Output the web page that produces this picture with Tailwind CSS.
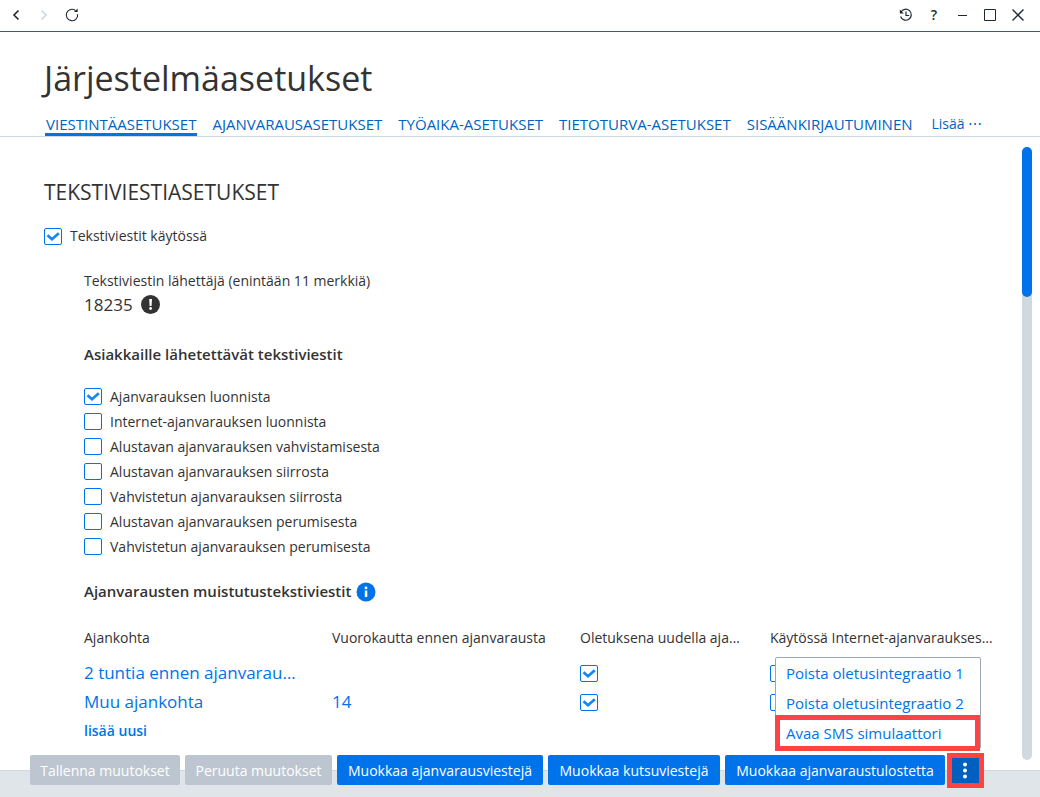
<!DOCTYPE html>
<html lang="fi">
<head>
    <meta charset="UTF-8">
    <meta name="viewport" content="width=device-width, initial-scale=1.0">
    <title>Järjestelmäasetukset</title>
    <script src="https://cdn.jsdelivr.net/npm/@tailwindcss/browser@4"></script>
</head>
<body class="flex h-screen flex-col overflow-hidden bg-white font-['Open_Sans','Noto_Sans',sans-serif] text-sm text-[#333333]">

    <!-- Window bar -->
    <div class="flex h-8 shrink-0 items-center justify-between border-b border-[#3b5998] px-2 pb-0.5 text-[#1f2933]">
        <div class="flex items-center gap-3">
            <button aria-label="Takaisin" class="size-4">
                <svg class="size-4" viewBox="0 0 16 16" fill="none" stroke="currentColor" stroke-width="1.6"><path d="M10.5 3.5 6 8l4.5 4.5"/></svg>
            </button>
            <button aria-label="Eteenpäin" class="size-4 text-[#ccd6e0]" disabled>
                <svg class="size-4" viewBox="0 0 16 16" fill="none" stroke="currentColor" stroke-width="1.6"><path d="M5.5 3.5 10 8l-4.5 4.5"/></svg>
            </button>
            <button aria-label="Päivitä" class="size-4">
                <svg class="size-4" viewBox="0 0 16 16" fill="none" stroke="currentColor" stroke-width="1.1"><path d="M13.6 7.2A5.700 5.700 0 1 1 11.600 3.600"/><path d="M10 5h3.600V1.500z" fill="currentColor" stroke="none"/></svg>
            </button>
        </div>
        <div class="flex items-center gap-3 pr-1.5">
            <button aria-label="Historia" class="size-4">
                <svg class="size-4" viewBox="0 0 16 16" fill="none" stroke="currentColor" stroke-width="1.2"><path d="M2.900 5.200A5.500 5.500 0 1 1 2.600 9.500"/><path d="M8 4.500V8.500h3.200"/><path d="M1.800 2.500v4h4z" fill="currentColor" stroke="none"/></svg>
            </button>
            <button aria-label="Ohje" class="size-4 text-sm leading-4 font-semibold">?</button>
            <button aria-label="Pienennä" class="size-4">
                <svg class="size-4" viewBox="0 0 16 16" stroke="currentColor"><path d="M4 8.500h9"/></svg>
            </button>
            <button aria-label="Suurenna" class="size-4">
                <svg class="size-4" viewBox="0 0 16 16" fill="none" stroke="currentColor"><path d="M2.500 2.500h11v11h-11z"/></svg>
            </button>
            <button aria-label="Sulje" class="size-4">
                <svg class="size-4" viewBox="0 0 16 16" stroke="currentColor" stroke-width="1.4"><path d="m2.500 2.500 11 11m0-11-11 11"/></svg>
            </button>
        </div>
    </div>

    <!-- Title and tabs -->
    <header class="shrink-0 border-b border-[#cfd8df] px-11 pt-[22px]">
        <h1 class="text-[34px] leading-[48px]">Järjestelmäasetukset</h1>
        <nav class="mt-[10px] flex gap-[14px] pl-px text-[15px] text-[#0063c2]">
            <a href="#" class="h-6 border-b-3 border-[#0073eb] px-px leading-6">VIESTINTÄASETUKSET</a>
            <a href="#" class="h-6 px-px leading-6">AJANVARAUSASETUKSET</a>
            <a href="#" class="h-6 px-px leading-6">TYÖAIKA-ASETUKSET</a>
            <a href="#" class="h-6 px-px leading-6">TIETOTURVA-ASETUKSET</a>
            <a href="#" class="h-6 px-px leading-6">SISÄÄNKIRJAUTUMINEN</a>
            <a href="#" class="h-6 px-1 text-sm leading-6">Lisää ⋯</a>
        </nav>
    </header>

    <div class="flex min-h-0 flex-1">
        <!-- Settings -->
        <main class="min-w-0 flex-1 overflow-hidden pt-[39px] pl-11">
            <h2 class="text-[21px] leading-8">TEKSTIVIESTIASETUKSET</h2>
            <label class="mt-4 flex h-6 items-center gap-2">
                <span class="relative flex">
                    <input type="checkbox" checked class="peer h-[17px] w-[18px] appearance-none rounded-xs border border-[#0073eb] bg-white">
                    <svg class="absolute inset-0 hidden h-[17px] w-[18px] peer-checked:block" viewBox="0 0 18 17" fill="none" stroke="#1487f5" stroke-width="2.8"><path d="m3.500 7.200 4.500 4 6.800-5.900"/></svg>
                </span>
                Tekstiviestit käytössä
            </label>

            <div class="pl-10">
                <div class="mt-[21px] leading-6">Tekstiviestin lähettäjä (enintään 11 merkkiä)</div>
                <div class="flex h-6 items-center gap-2 text-[17px]">
                    18235
                    <svg class="size-5" viewBox="0 0 20 20"><circle cx="9.5" cy="9.500" r="9.500" fill="#333"/><path d="M8.200 4h2.800l-.4 7H8.600z" fill="#fff"/><circle cx="9.600" cy="13.500" r="1.400" fill="#fff"/></svg>
                </div>

                <h3 class="mt-[25px] text-[15px] leading-6 font-semibold">Asiakkaille lähetettävät tekstiviestit</h3>
                <div id="messages" class="mt-[18px]">
                    <label class="flex h-[25px] items-center gap-2">
                        <span class="relative flex">
                            <input type="checkbox" class="peer h-[17px] w-[18px] appearance-none rounded-xs border border-[#0073eb] bg-white">
                            <svg class="absolute inset-0 hidden h-[17px] w-[18px] peer-checked:block" viewBox="0 0 18 17" fill="none" stroke="#1487f5" stroke-width="2.8"><path d="m3.500 7.200 4.500 4 6.800-5.900"/></svg>
                        </span>
                        <span class="msg-text">Ajanvarauksen luonnista</span>
                    </label>
                </div>

                <div class="mt-[21px] flex h-6 items-center gap-[5px]">
                    <h3 class="text-[15px] font-semibold">Ajanvarausten muistutustekstiviestit</h3>
                    <svg class="size-5" viewBox="0 0 20 20"><circle cx="10" cy="10" r="9.500" fill="#0073eb"/><path d="M8.800 8.500h2.500v6.500H8.800z" fill="#fff"/><circle cx="10" cy="5.900" r="1.400" fill="#fff"/></svg>
                </div>

                <table class="mt-[21px] w-[912px] table-fixed text-left">
                    <thead>
                        <tr class="h-[26px]">
                            <th class="w-[248px] font-normal">Ajankohta</th>
                            <th class="w-[248px] font-normal">Vuorokautta ennen ajanvarausta</th>
                            <th class="w-[190px] truncate pr-7 font-normal">Oletuksena uudella ajanvarauksella</th>
                            <th class="truncate font-normal">Käytössä Internet-ajanvarauksessa</th>
                        </tr>
                    </thead>
                    <tbody class="text-[17px] text-[#0073eb]">
                        <tr class="h-2"></tr>
                        <tr class="h-[29px]">
                            <td class="truncate pr-9"><a href="#">2 tuntia ennen ajanvarausta</a></td>
                            <td></td>
                            <td>
                                <span class="relative flex">
                                    <input type="checkbox" checked aria-label="Oletuksena, 2 tuntia ennen" class="peer h-[17px] w-[18px] appearance-none rounded-xs border border-[#0073eb] bg-white">
                                    <svg class="absolute top-0 left-0 hidden h-[17px] w-[18px] peer-checked:block" viewBox="0 0 18 17" fill="none" stroke="#1487f5" stroke-width="2.8"><path d="m3.500 7.200 4.500 4 6.800-5.900"/></svg>
                                </span>
                            </td>
                            <td><input type="checkbox" aria-label="Internet, 2 tuntia ennen" class="block h-[17px] w-[18px] appearance-none rounded-xs border border-[#0073eb] bg-white"></td>
                        </tr>
                        <tr class="h-[29px]">
                            <td class="truncate pr-9"><a href="#">Muu ajankohta</a></td>
                            <td>14</td>
                            <td>
                                <span class="relative flex">
                                    <input type="checkbox" checked aria-label="Oletuksena, muu ajankohta" class="peer h-[17px] w-[18px] appearance-none rounded-xs border border-[#0073eb] bg-white">
                                    <svg class="absolute top-0 left-0 hidden h-[17px] w-[18px] peer-checked:block" viewBox="0 0 18 17" fill="none" stroke="#1487f5" stroke-width="2.8"><path d="m3.500 7.200 4.500 4 6.800-5.900"/></svg>
                                </span>
                            </td>
                            <td><input type="checkbox" aria-label="Internet, muu ajankohta" class="block h-[17px] w-[18px] appearance-none rounded-xs border border-[#0073eb] bg-white"></td>
                        </tr>
                    </tbody>
                </table>
                <button class="h-7 font-semibold text-[#0073eb]">lisää uusi</button>
            </div>
        </main>

        <!-- Scrollbar -->
        <div class="mt-[10px] mr-2 mb-[10px] w-[10px] shrink-0 rounded-full bg-[#d1d9e0]">
            <div class="h-[150px] rounded-full bg-[#0073eb]"></div>
        </div>
    </div>

    <!-- Footer actions -->
    <footer class="flex h-[27px] shrink-0 items-center border-t border-[#cfd8df] bg-[#e0e5e9] pl-[30px] text-white">
        <div class="flex -translate-y-[14px] items-center gap-[5px]">
            <button disabled class="h-[30px] w-[150px] rounded-xs bg-[#bdc6d0] pt-0.5">Tallenna muutokset</button>
            <button disabled class="h-[30px] w-[147px] rounded-xs bg-[#bdc6d0] pt-0.5">Peruuta muutokset</button>
            <button class="h-[30px] w-[206px] rounded-xs bg-[#0073eb] pt-0.5">Muokkaa ajanvarausviestejä</button>
            <button class="h-[30px] w-[172px] rounded-xs bg-[#0073eb] pt-0.5">Muokkaa kutsuviestejä</button>
            <button class="h-[30px] w-[220px] rounded-xs bg-[#0073eb] pt-0.5">Muokkaa ajanvaraustulostetta</button>
            <div class="relative -ml-[3px]">
                <button aria-label="Lisää toimintoja" class="flex h-[35px] w-[37px] items-center justify-center border-5 border-[#ff4343] bg-[#0060c0] pr-0.5">
                    <svg class="h-[17px] w-1" viewBox="0 0 4 17" fill="#fff"><circle cx="2" cy="2.500" r="2"/><circle cx="2" cy="8.500" r="2"/><circle cx="2" cy="14.500" r="2"/></svg>
                </button>
                <!-- Popup menu -->
                <div class="absolute right-[3px] bottom-full mb-1 flex w-[206px] flex-col rounded-xs border border-[#9aa8b4] bg-white text-[15px] text-[#0073eb]">
                    <button class="h-[30px] px-[10px] pt-0.5 text-left">Poista oletusintegraatio 1</button>
                    <button class="h-[30px] px-[10px] pt-0.5 text-left">Poista oletusintegraatio 2</button>
                    <button class="relative h-[30px] px-[10px] pt-0.5 text-left">
                        Avaa SMS simulaattori
                        <span class="absolute -inset-y-[3px] right-0 -left-px border-5 border-[#ff4343]"></span>
                    </button>
                </div>
            </div>
        </div>
    </footer>

    <script>
        const messages = document.getElementById('messages');
        const firstRow = messages.querySelector('label');

        const otherMessages = [
            'Internet-ajanvarauksen luonnista',
            'Alustavan ajanvarauksen vahvistamisesta',
            'Alustavan ajanvarauksen siirrosta',
            'Vahvistetun ajanvarauksen siirrosta',
            'Alustavan ajanvarauksen perumisesta',
            'Vahvistetun ajanvarauksen perumisesta'
        ];

        otherMessages.forEach(text => {
            const row = firstRow.cloneNode(true);
            row.querySelector('.msg-text').textContent = text;
            messages.appendChild(row);
        });

        // Only the first message is on by default
        firstRow.querySelector('input').checked = true;
    </script>

</body>
</html>
